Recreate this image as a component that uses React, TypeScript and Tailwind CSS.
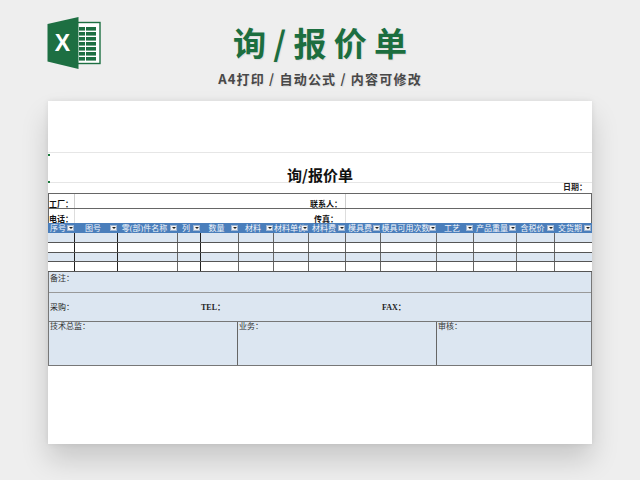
const cols = "grid grid-cols-[27px_43px_60px_23px_38px_35px_35px_37px_35px_56px_37px_43px_38px_37px]";
const font = { cjk: "font-['Liberation_Serif','Noto_Sans_CJK_SC',serif]" };

const headers = [
  "序号",
  "图号",
  "零(部)件名称",
  "列",
  "数量",
  "材料",
  "材料单价",
  "材料费",
  "模具费",
  "模具可用次数",
  "工艺",
  "产品重量",
  "含税价",
  "交货期",
];

function ExcelLogo() {
  return (
    <svg width="54" height="53" viewBox="0 0 54 53" className="ml-[47px] mt-[17px]">
      <rect x="30" y="5.5" width="23" height="41" fill="#ffffff" stroke="#1d6f42" strokeWidth="1.4" />
      {[10, 15, 20, 25, 30, 35, 40].map((y) => (
        <g key={y} fill="#1d6f42">
          <rect x="32" y={y} width="6" height="3.6" />
          <rect x="39" y={y} width="10" height="3.6" />
        </g>
      ))}
      <polygon points="0.5,7 31.5,0 31.5,52 0.5,44.5" fill="#1d6f42" />
      <text
        x="15.5"
        y="34"
        textAnchor="middle"
        fill="#ffffff"
        fontSize="23"
        fontWeight="700"
        fontFamily="Liberation Sans, sans-serif"
      >
        X
      </text>
    </svg>
  );
}

function FilterButton() {
  return (
    <span className="absolute right-[1px] top-[2px] flex h-[6px] w-[7px] items-center justify-center border border-[#9fb6d3] bg-[#f2f2f2]">
      <span className="h-0 w-0 border-x-[2px] border-t-[2px] border-x-transparent border-t-[#222]" />
    </span>
  );
}

function DataRow({ tinted }: { tinted?: boolean }) {
  return (
    <div className={`${cols} h-[9.8px] border-b border-[#555] ${tinted ? "bg-[#dce6f1]" : "bg-white"}`}>
      {headers.map((h, i) => (
        <div key={h} className={i === 13 ? "" : i === 0 || i === 1 || i === 3 ? "border-r border-[#222]" : "border-r border-[#666]"} />
      ))}
    </div>
  );
}

export default function App() {
  return (
    <div className={`flex h-[480px] w-[640px] flex-col overflow-hidden bg-[#eeeeee] ${font.cjk}`}>
      {/* Header */}
      <div className="grid h-[101px] shrink-0 grid-cols-[1fr_auto_1fr]">
        <ExcelLogo />
        <div className="flex flex-col items-center font-['Noto_Sans_CJK_SC',sans-serif]">
          <h1 className="mt-[20px] h-[44px] text-[33px] font-bold leading-[44px] tracking-[-0.1px] whitespace-nowrap text-[#1c6e3f] [text-shadow:1px_1px_1px_rgba(0,0,0,0.08)]">
            询 / 报 价 单
          </h1>
          <p className="mt-[6px] text-[13px] font-bold leading-[18px] tracking-[1.2px] whitespace-nowrap text-[#484848] [text-shadow:1px_1px_1px_rgba(0,0,0,0.08)]">
            A4打印 / 自动公式 / 内容可修改
          </p>
        </div>
        <div />
      </div>

      {/* Sheet */}
      <div className="ml-[48px] h-[343px] w-[544px] shrink-0 bg-white shadow-[0_16px_26px_rgba(0,0,0,0.16),0_0_6px_rgba(0,0,0,0.08)]">
        <div className="h-[52px] border-b border-[#e6e6e6]" />
        <div className="relative flex h-[30px] items-end justify-center border-b border-[#e6e6e6] text-[15px] font-bold leading-[16px] text-[#111]">
          <span className="absolute left-0 top-[1px] h-[2px] w-[2px] bg-[#1d7a3d]" />
          <span className="absolute bottom-[-1px] left-0 h-[2px] w-[2px] bg-[#1d7a3d]" />
          <span className="mb-[-1px] font-['Noto_Sans_CJK_SC',serif]">询/报价单</span>
        </div>
        <div className="flex h-[10px] items-center justify-end pr-[5px] text-[8px] font-bold text-[#222]">日期：</div>

        <div className="border-x border-t border-[#666]">
          <div className="grid h-[15px] grid-cols-[25px_271px_1fr] items-end border-b border-[#666] text-[8px] font-bold leading-[6px] text-[#111]">
            <span className="whitespace-nowrap">工厂：</span>
            <span className="flex items-end justify-end self-stretch whitespace-nowrap border-l border-[#ccc] pr-[3px]">联系人：</span>
            <span className="self-stretch border-l border-[#ccc]" />
          </div>
          <div className="grid h-[14px] grid-cols-[25px_271px_1fr] items-end text-[8px] font-bold leading-[6px] text-[#111]">
            <span className="whitespace-nowrap">电话：</span>
            <span className="flex items-end justify-end self-stretch whitespace-nowrap border-l border-[#ddd] pr-[7px]">传真：</span>
            <span className="self-stretch border-l border-[#ddd]" />
          </div>
        </div>

        {/* Table head */}
        <div className={`${cols} h-[10px] bg-[#4a7ebb] text-[8px] leading-[11px] text-[#f2f5fa]`}>
          {headers.map((h) => (
            <div key={h} className="relative overflow-hidden whitespace-nowrap pr-[7px] text-center">
              {h}
              <FilterButton />
            </div>
          ))}
        </div>

        <div className="shadow-[inset_1px_0_#666,inset_-1px_0_#666]">
          <DataRow tinted />
          <DataRow />
          <DataRow tinted />
          <DataRow />
        </div>

        {/* Footer */}
        <div className="border-x border-b border-[#777] bg-[#dce6f1] text-[8px] leading-[10px] text-[#333]">
          <div className="h-[21.3px] border-b border-[#999] pl-[1px] pt-[2px]">备注：</div>
          <div className="grid h-[28.3px] grid-cols-[152px_181px_1fr] items-center border-b border-[#777] pl-0 pt-[2px] font-bold text-[#222]">
            <span className="pl-[1px] font-normal">采购：</span>
            <span>TEL：</span>
            <span>FAX：</span>
          </div>
          <div className="grid h-[43px] grid-cols-[189px_199px_1fr]">
            <span className="border-r border-[#666] pl-[1px]">技术总监：</span>
            <span className="border-r border-[#666] pl-[1px]">业务：</span>
            <span className="pl-[1px]">审核：</span>
          </div>
        </div>
      </div>
    </div>
  );
}
